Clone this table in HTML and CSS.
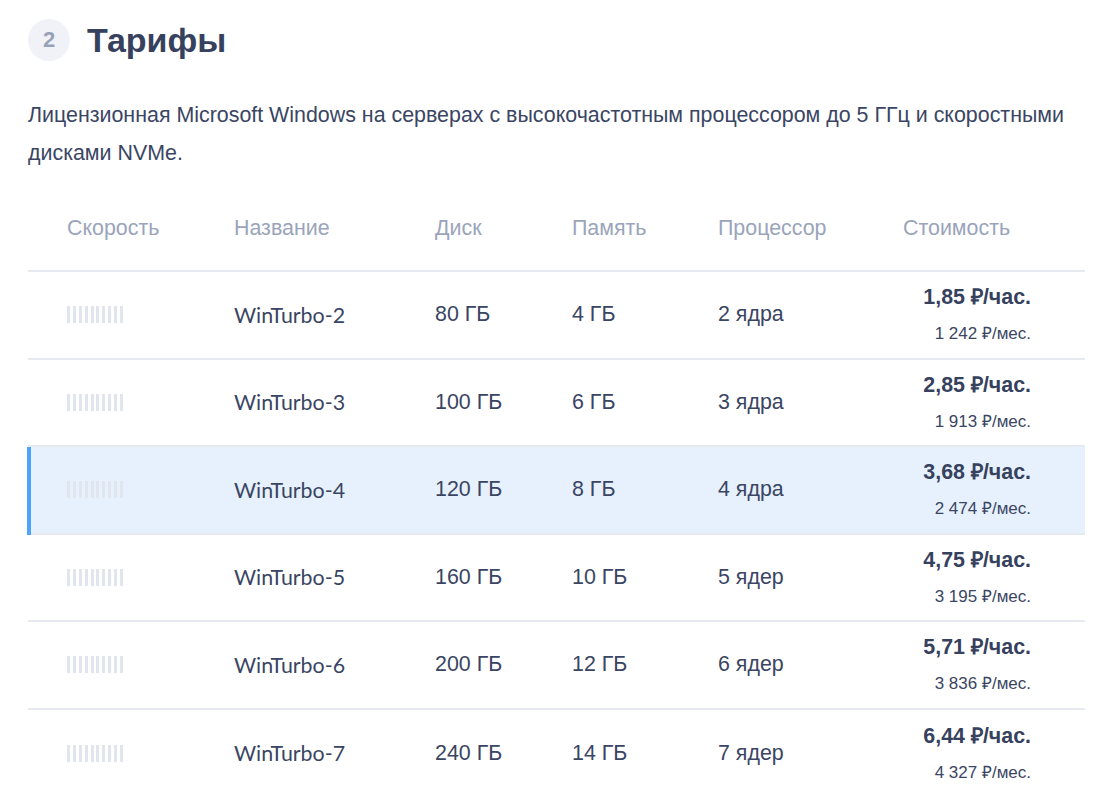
FILE: index.html
```html
<!DOCTYPE html>
<html lang="ru">
<head>
    <meta charset="UTF-8">
    <meta name="viewport" content="width=device-width, initial-scale=1.0">
    <title>Тарифы</title>
    <link rel="stylesheet" href="styles.css">
</head>
<body>
    <section class="tariffs">
        <div class="section-head">
            <span class="step">2</span>
            <h2 class="section-title">Тарифы</h2>
        </div>

        <p class="section-desc">
            Лицензионная Microsoft Windows на серверах с высокочастотным процессором до 5 ГГц и скоростными дисками NVMe.
        </p>

        <div class="plans">
            <div class="plan-row plan-head">
                <div class="cell speed">Скорость</div>
                <div class="cell">Название</div>
                <div class="cell">Диск</div>
                <div class="cell">Память</div>
                <div class="cell">Процессор</div>
                <div class="cell">Стоимость</div>
            </div>

            <div class="plan-row">
                <div class="cell speed"><div class="bars"><i></i><i></i><i></i><i></i><i></i><i></i><i></i><i></i><i></i><i></i></div></div>
                <div class="cell name">WinTurbo-2</div>
                <div class="cell">80 ГБ</div>
                <div class="cell">4 ГБ</div>
                <div class="cell">2 ядра</div>
                <div class="cell price">
                    <span class="per-hour">1,85 ₽/час.</span>
                    <span class="per-month">1 242 ₽/мес.</span>
                </div>
            </div>

            <div class="plan-row">
                <div class="cell speed"><div class="bars"><i></i><i></i><i></i><i></i><i></i><i></i><i></i><i></i><i></i><i></i></div></div>
                <div class="cell name">WinTurbo-3</div>
                <div class="cell">100 ГБ</div>
                <div class="cell">6 ГБ</div>
                <div class="cell">3 ядра</div>
                <div class="cell price">
                    <span class="per-hour">2,85 ₽/час.</span>
                    <span class="per-month">1 913 ₽/мес.</span>
                </div>
            </div>

            <div class="plan-row active">
                <div class="cell speed"><div class="bars"><i></i><i></i><i></i><i></i><i></i><i></i><i></i><i></i><i></i><i></i></div></div>
                <div class="cell name">WinTurbo-4</div>
                <div class="cell">120 ГБ</div>
                <div class="cell">8 ГБ</div>
                <div class="cell">4 ядра</div>
                <div class="cell price">
                    <span class="per-hour">3,68 ₽/час.</span>
                    <span class="per-month">2 474 ₽/мес.</span>
                </div>
            </div>

            <div class="plan-row">
                <div class="cell speed"><div class="bars"><i></i><i></i><i></i><i></i><i></i><i></i><i></i><i></i><i></i><i></i></div></div>
                <div class="cell name">WinTurbo-5</div>
                <div class="cell">160 ГБ</div>
                <div class="cell">10 ГБ</div>
                <div class="cell">5 ядер</div>
                <div class="cell price">
                    <span class="per-hour">4,75 ₽/час.</span>
                    <span class="per-month">3 195 ₽/мес.</span>
                </div>
            </div>

            <div class="plan-row">
                <div class="cell speed"><div class="bars"><i></i><i></i><i></i><i></i><i></i><i></i><i></i><i></i><i></i><i></i></div></div>
                <div class="cell name">WinTurbo-6</div>
                <div class="cell">200 ГБ</div>
                <div class="cell">12 ГБ</div>
                <div class="cell">6 ядер</div>
                <div class="cell price">
                    <span class="per-hour">5,71 ₽/час.</span>
                    <span class="per-month">3 836 ₽/мес.</span>
                </div>
            </div>

            <div class="plan-row">
                <div class="cell speed"><div class="bars"><i></i><i></i><i></i><i></i><i></i><i></i><i></i><i></i><i></i><i></i></div></div>
                <div class="cell name">WinTurbo-7</div>
                <div class="cell">240 ГБ</div>
                <div class="cell">14 ГБ</div>
                <div class="cell">7 ядер</div>
                <div class="cell price">
                    <span class="per-hour">6,44 ₽/час.</span>
                    <span class="per-month">4 327 ₽/мес.</span>
                </div>
            </div>
        </div>
    </section>
</body>
</html>
```

FILE: styles.css
```css
* {
    margin: 0;
    padding: 0;
    box-sizing: border-box;
}

body {
    font-family: 'Liberation Sans', Arial, sans-serif;
    background: #ffffff;
    color: #3a4563;
    overflow: hidden;
}

.tariffs {
    padding: 19px 15px 0 28px;
}

/* Heading */
.section-head {
    display: flex;
    align-items: center;
    gap: 17px;
}

.step {
    width: 42px;
    height: 42px;
    border-radius: 50%;
    background: #f0f2f7;
    color: #97a1b7;
    font-size: 22px;
    font-weight: bold;
    display: flex;
    justify-content: center;
    align-items: center;
}

.section-title {
    font-size: 34px;
    font-weight: bold;
    color: #36415e;
    line-height: 42px;
}

.section-desc {
    margin-top: 35px;
    font-size: 21.4px;
    line-height: 38px;
    color: #3a4563;
}

/* Plans table */
.plans {
    margin-top: 14px;
}

.plan-row {
    display: grid;
    grid-template-columns: 206px 201px 137px 146px 185px 128px;
    align-items: center;
    height: 87.5px;
    border-bottom: 2px solid #e6e9f0;
    font-size: 21.4px;
    position: relative;
}

.plan-head {
    height: 86px;
    color: #9aa4ba;
}

.plan-row:last-child {
    border-bottom: none;
}

.cell.speed {
    padding-left: 39px;
}

.cell.name {
    font-family: Lato, 'Liberation Sans', sans-serif;
    font-size: 21.4px;
}

.bars {
    width: 56px;
    height: 17px;
    display: flex;
    justify-content: space-between;
}

.bars i {
    width: 3px;
    height: 100%;
    background: #e0e5ee;
}

.price {
    display: flex;
    flex-direction: column;
    align-items: flex-end;
    padding-bottom: 4px;
}

.per-hour {
    font-size: 21.4px;
    font-weight: bold;
    color: #36415e;
}

.per-month {
    margin-top: 11px;
    font-size: 17px;
    color: #3a4563;
}

/* Selected plan */
.plan-row.active {
    background: #e6f1fd;
    margin-left: -1px;
    padding-left: 1px;
}

.plan-row.active::before {
    content: '';
    position: absolute;
    left: 0;
    top: 0;
    bottom: -2px;
    width: 4px;
    background: #4ea4f8;
}
```
